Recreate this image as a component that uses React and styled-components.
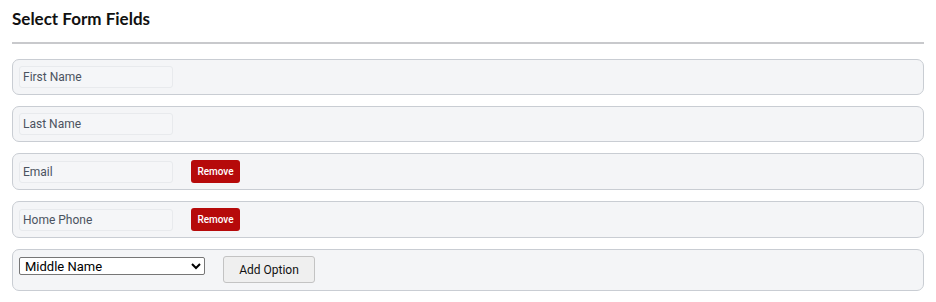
import React, { useState } from 'react';
import styled, { createGlobalStyle } from 'styled-components';

const GlobalStyle = createGlobalStyle`
  body {
    margin: 0;
    background: #fff;
    font-family: "Liberation Sans", Arial, sans-serif;
  }
`;

const Page = styled.div`
  width: 912px;
  padding: 0 12px;
`;

const Title = styled.h2`
  margin: 0 0 15px;
  padding: 8px 0 12px;
  font-family: Lato, "Noto Sans", sans-serif;
  font-size: 17px;
  font-weight: 700;
  line-height: 22px;
  color: #111;
  border-bottom: 2px solid #c8c9cc;
`;

const List = styled.div`
  display: flex;
  flex-direction: column;
  gap: 11px;
`;

const FieldRow = styled.div`
  display: flex;
  align-items: ${({ $tall }) => ($tall ? 'flex-start' : 'center')};
  gap: 18px;
  box-sizing: border-box;
  height: ${({ $h }) => $h}px;
  padding: ${({ $tall }) => ($tall ? '6px 6px 0' : '0 6px')};
  background: #f4f5f7;
  border: 1px solid #c9cdd3;
  border-radius: 7px;
`;

const FieldLabel = styled.div`
  width: 154px;
  height: 22px;
  box-sizing: border-box;
  padding: 0 3px;
  display: flex;
  align-items: center;
  background: #f5f6f8;
  border: 1px solid #e8eaed;
  border-radius: 3px;
  font-family: Roboto, "Liberation Sans", sans-serif;
  font-size: 12px;
  color: #4b5360;
`;

const RemoveButton = styled.button`
  height: 23px;
  width: 49px;
  padding: 0;
  border: none;
  border-radius: 3px;
  background: #b60a0a;
  color: #fff;
  font-family: Roboto, "Liberation Sans", sans-serif;
  font-size: 10px;
  font-weight: 500;
  cursor: pointer;
`;

const Select = styled.select`
  width: 186px;
  height: 18px;
  box-sizing: border-box;
  margin-top: 1px;
  padding: 0 0 0 1px;
  font-family: Roboto, "Liberation Sans", sans-serif;
  font-size: 13px;
  color: #000;
  background: #fff;
  border: 1px solid #767676;
  border-radius: 2px;
`;

const AddButton = styled.button`
  width: 92px;
  height: 27px;
  box-sizing: border-box;
  border: 1px solid #c3c3c3;
  border-radius: 3px;
  background: #efefef;
  font-family: Roboto, "Liberation Sans", sans-serif;
  font-size: 12px;
  color: #111;
`;

const initial = [
  { name: 'First Name', removable: false },
  { name: 'Last Name', removable: false },
  { name: 'Email', removable: true },
  { name: 'Home Phone', removable: true },
];

export default function App() {
  const [fields] = useState(initial);
  return (
    <Page>
      <GlobalStyle />
      <Title>Select Form Fields</Title>
      <List>
        {fields.map((f) => (
          <FieldRow key={f.name} $h={f.removable ? 37 : 36}>
            <FieldLabel>{f.name}</FieldLabel>
            {f.removable && <RemoveButton>Remove</RemoveButton>}
          </FieldRow>
        ))}
        <FieldRow $tall $h={42}>
          <Select defaultValue="Middle Name">
            <option>Middle Name</option>
            <option>Work Phone</option>
            <option>Address</option>
          </Select>
          <AddButton>Add Option</AddButton>
        </FieldRow>
      </List>
    </Page>
  );
}
